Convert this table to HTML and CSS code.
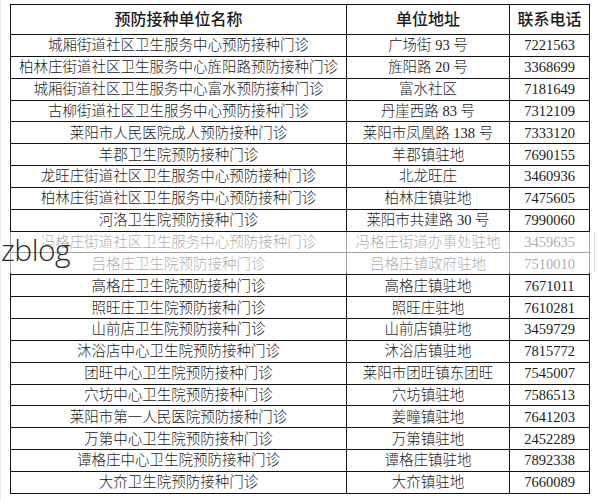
FILE: index.html
```html
<!DOCTYPE html>
<html lang="zh-CN">
<head>
<meta charset="utf-8">
<title>预防接种单位</title>
<link rel="stylesheet" href="styles.css">
</head>
<body>
<div class="page">
<table class="clinics">
<colgroup><col class="c-name"><col class="c-addr"><col class="c-tel"></colgroup>
<thead>
<tr><th>预防接种单位名称</th><th>单位地址</th><th>联系电话</th></tr>
</thead>
<tbody>
<tr><td>城厢街道社区卫生服务中心预防接种门诊</td><td>广场街 93 号</td><td>7221563</td></tr>
<tr><td>柏林庄街道社区卫生服务中心旌阳路预防接种门诊</td><td>旌阳路 20 号</td><td>3368699</td></tr>
<tr><td>城厢街道社区卫生服务中心富水预防接种门诊</td><td>富水社区</td><td>7181649</td></tr>
<tr><td>古柳街道社区卫生服务中心预防接种门诊</td><td>丹崖西路 83 号</td><td>7312109</td></tr>
<tr><td>莱阳市人民医院成人预防接种门诊</td><td>莱阳市凤凰路 138 号</td><td>7333120</td></tr>
<tr><td>羊郡卫生院预防接种门诊</td><td>羊郡镇驻地</td><td>7690155</td></tr>
<tr><td>龙旺庄街道社区卫生服务中心预防接种门诊</td><td>北龙旺庄</td><td>3460936</td></tr>
<tr><td>柏林庄街道社区卫生服务中心预防接种门诊</td><td>柏林庄镇驻地</td><td>7475605</td></tr>
<tr><td>河洛卫生院预防接种门诊</td><td>莱阳市共建路 30 号</td><td>7990060</td></tr>
<tr><td>冯格庄街道社区卫生服务中心预防接种门诊</td><td>冯格庄街道办事处驻地</td><td>3459635</td></tr>
<tr><td>吕格庄卫生院预防接种门诊</td><td>吕格庄镇政府驻地</td><td>7510010</td></tr>
<tr><td>高格庄卫生院预防接种门诊</td><td>高格庄镇驻地</td><td>7671011</td></tr>
<tr><td>照旺庄卫生院预防接种门诊</td><td>照旺庄驻地</td><td>7610281</td></tr>
<tr><td>山前店卫生院预防接种门诊</td><td>山前店镇驻地</td><td>3459729</td></tr>
<tr><td>沐浴店中心卫生院预防接种门诊</td><td>沐浴店镇驻地</td><td>7815772</td></tr>
<tr><td>团旺中心卫生院预防接种门诊</td><td>莱阳市团旺镇东团旺</td><td>7545007</td></tr>
<tr><td>穴坊中心卫生院预防接种门诊</td><td>穴坊镇驻地</td><td>7586513</td></tr>
<tr><td>莱阳市第一人民医院预防接种门诊</td><td>姜疃镇驻地</td><td>7641203</td></tr>
<tr><td>万第中心卫生院预防接种门诊</td><td>万第镇驻地</td><td>2452289</td></tr>
<tr><td>谭格庄中心卫生院预防接种门诊</td><td>谭格庄镇驻地</td><td>7892338</td></tr>
<tr><td>大夼卫生院预防接种门诊</td><td>大夼镇驻地</td><td>7660089</td></tr>
</tbody>
</table>
<div class="fade-band"></div>
<div class="watermark">zblog</div>
</div>
</body>
</html>
```
FILE: styles.css
```css
html, body {
  margin: 0;
  padding: 0;
  background: #ffffff;
}
.page {
  position: relative;
  width: 598px;
  height: 500px;
  padding: 4px 0 0 9px;
  box-sizing: border-box;
  border-left: 1px solid #f0f0f0;
}
.clinics {
  border-collapse: collapse;
  table-layout: fixed;
  width: 579px;
  font-family: "Liberation Serif", "Noto Sans CJK SC", serif;
  color: #1c1c1c;
}
.c-name { width: 336px; }
.c-addr { width: 163px; }
.c-tel { width: 80px; }
.clinics th,
.clinics td {
  border: 1px solid #111;
  padding: 0;
  text-align: center;
  white-space: nowrap;
  overflow: visible;
}
.clinics th {
  height: 29px;
  font-size: 16px;
  font-weight: 500;
  line-height: 29px;
}
.clinics td {
  height: 20.85px;
  font-size: 14.5px;
  font-weight: 300;
  line-height: 20px;
}
.fade-band {
  position: absolute;
  left: 8px;
  top: 232px;
  width: 585px;
  height: 41px;
  background: rgba(255, 255, 255, 0.62);
  border-right: 1px solid #d8d8d8;
}
.watermark {
  position: absolute;
  left: 0;
  top: 232px;
  font-family: "Open Sans", "Liberation Sans", sans-serif;
  font-weight: 300;
  font-size: 30px;
  line-height: 36px;
  letter-spacing: -0.5px;
  color: #2a2a2a;
}
```
